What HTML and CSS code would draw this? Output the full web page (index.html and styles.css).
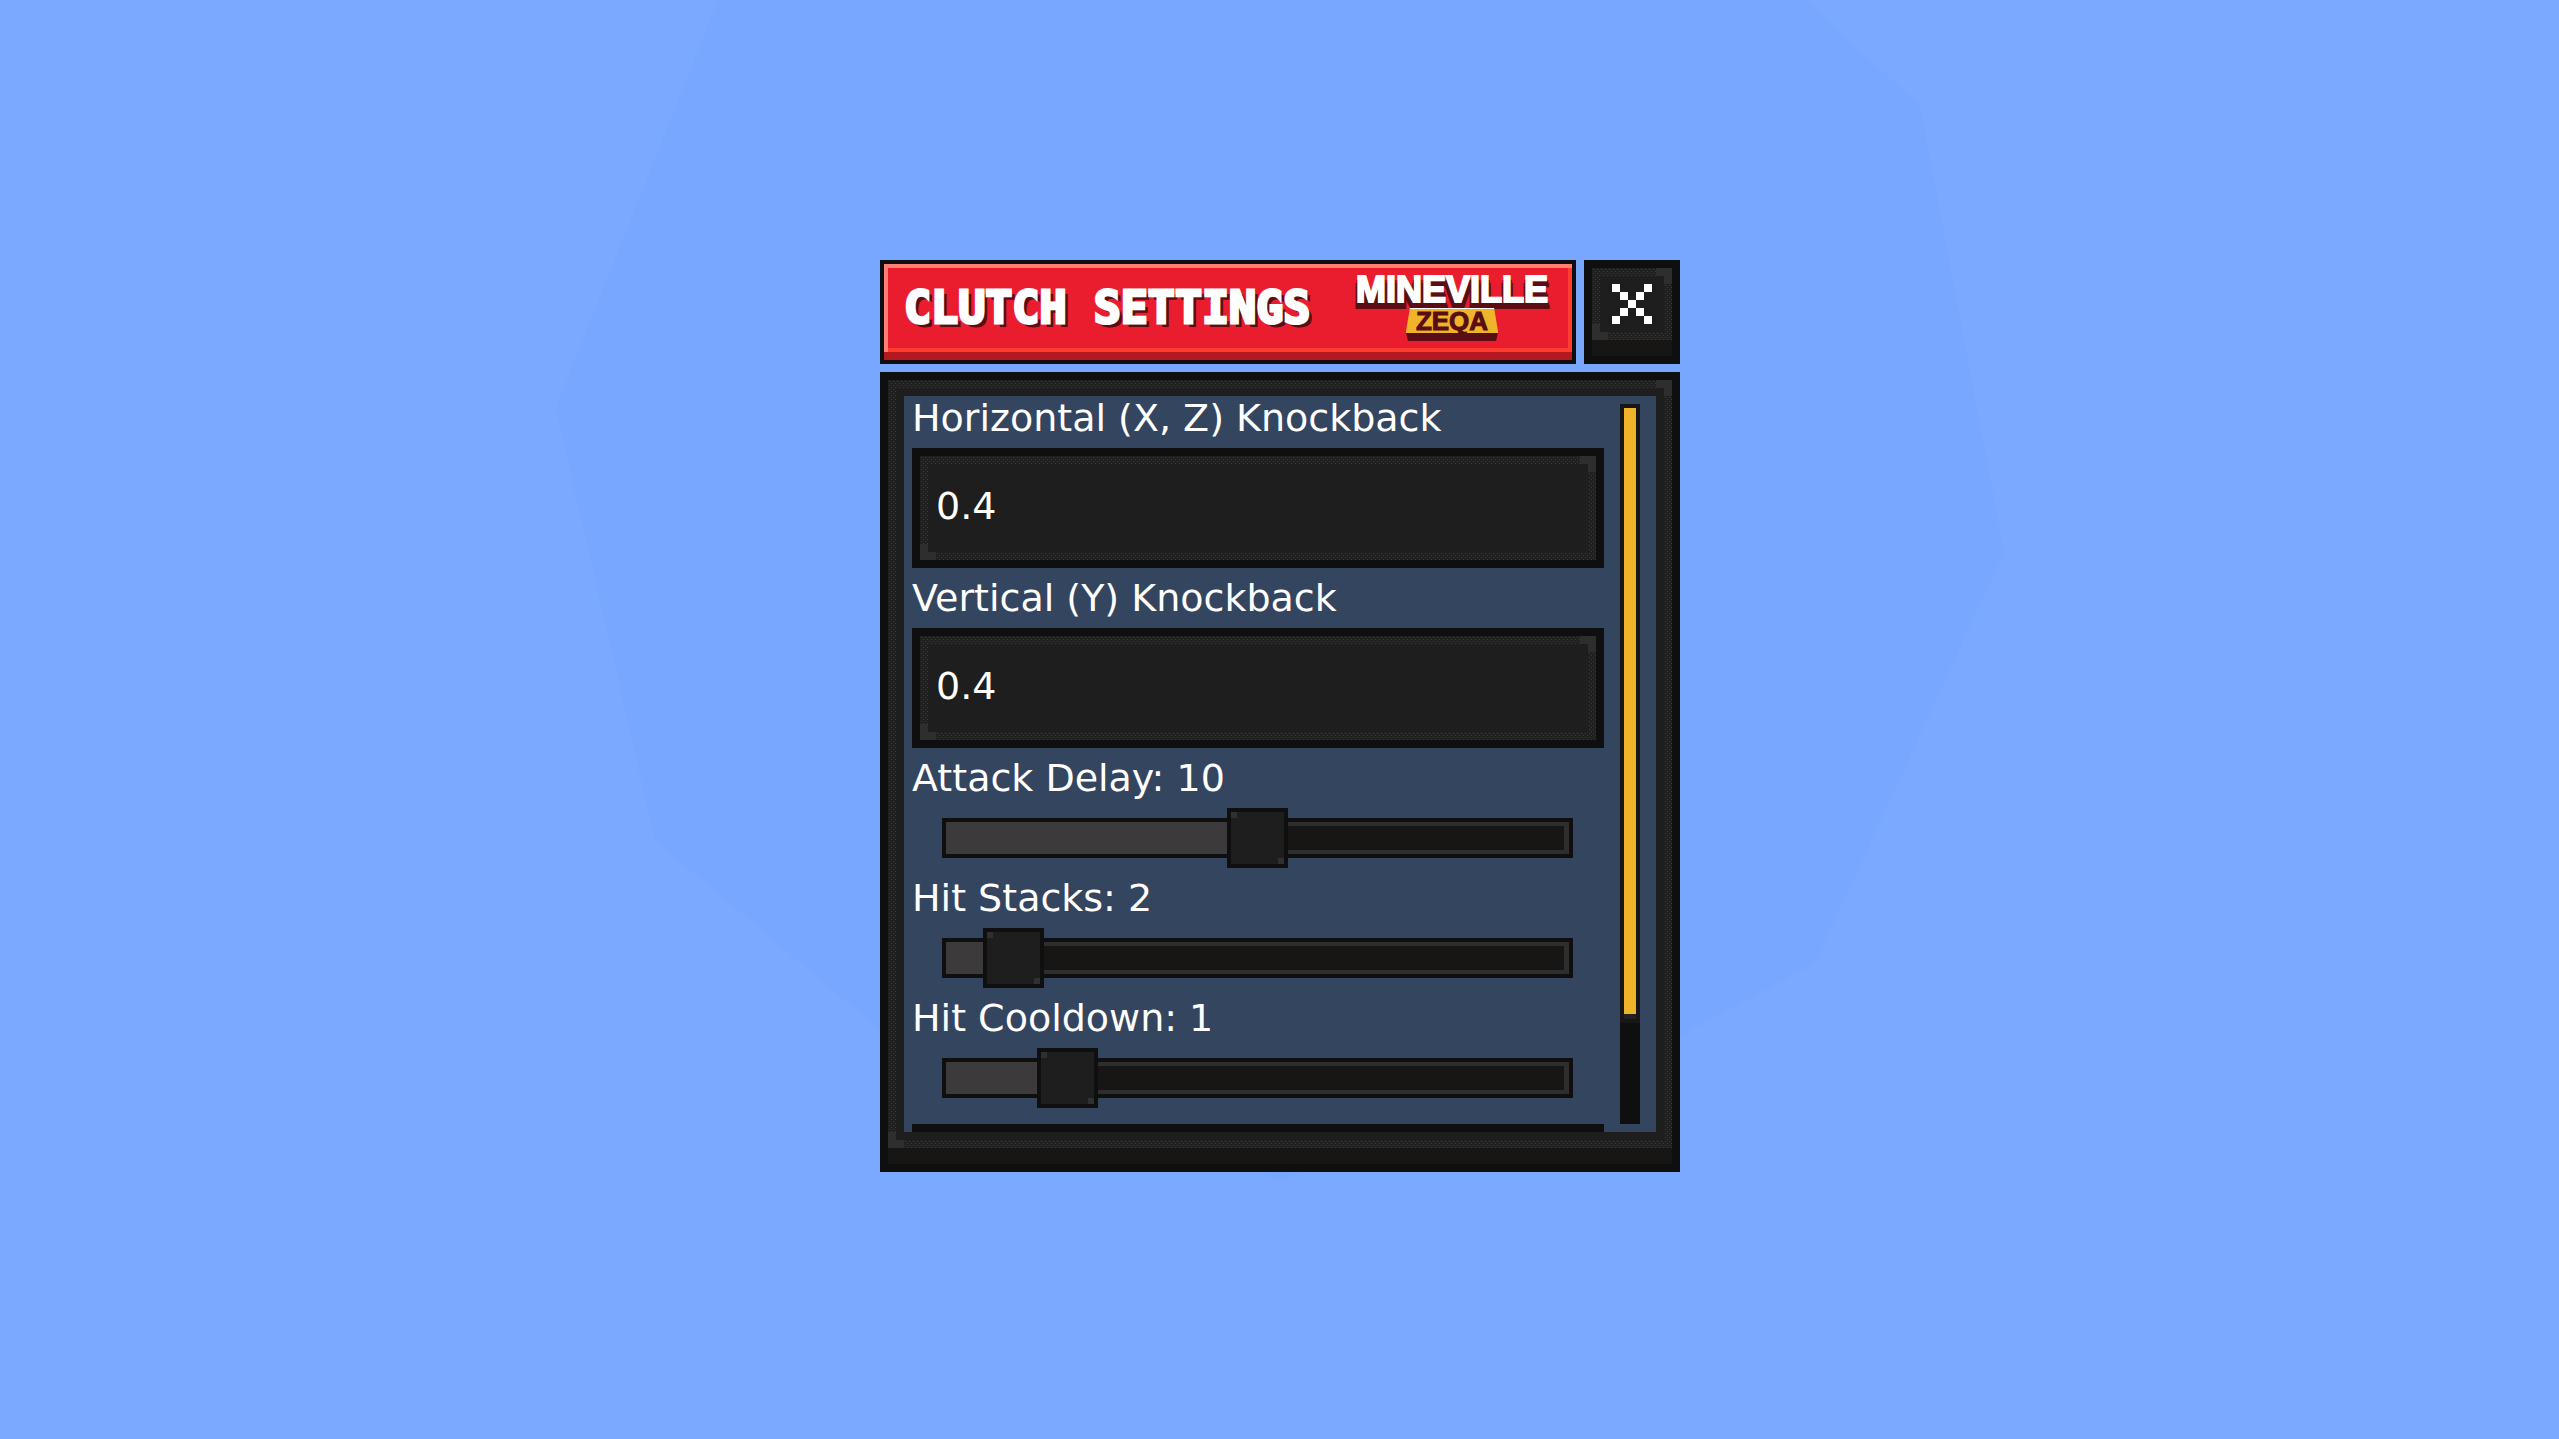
FILE: index.html
```html
<!DOCTYPE html>
<html lang="en">
<head>
<meta charset="utf-8">
<title>Clutch Settings</title>
<link rel="stylesheet" href="styles.css">
</head>
<body>
<svg class="sky" viewBox="0 0 2559 1439" preserveAspectRatio="xMidYMid slice" aria-hidden="true">
  <polygon points="718,0 1806,0 1920,106 2004,552 1815,963 1680,1036 1280,1180 880,1030 655,840 556,408"/>
</svg>
<main class="dialog">
  <header class="top">
    <div class="banner">
      <h1 class="title">CLUTCH SETTINGS</h1>
      <div class="logo">
        <span class="logo-name">MINEVILLE</span>
        <span class="logo-tag">ZEQA</span>
      </div>
    </div>
    <button class="close" type="button" aria-label="Close">
      <svg class="cross" viewBox="0 0 5 5" aria-hidden="true" shape-rendering="crispEdges">
        <path d="M0 0h1v1H0zM4 0h1v1H4zM1 1h1v1H1zM3 1h1v1H3zM2 2h1v1H2zM1 3h1v1H1zM3 3h1v1H3zM0 4h1v1H0zM4 4h1v1H4z"/>
      </svg>
    </button>
  </header>
  <section class="panel">
    <div class="frame">
      <div class="view">
        <form class="fields">
          <label class="label" for="horizontal">Horizontal (X, Z) Knockback</label>
          <input class="text" id="horizontal" type="text" value="0.4">
          <label class="label" for="vertical">Vertical (Y) Knockback</label>
          <input class="text" id="vertical" type="text" value="0.4">
          <label class="label" for="delay">Attack Delay: 10</label>
          <input class="range" id="delay" type="range" min="0" max="20" value="10" style="--fill:50%">
          <label class="label" for="stacks">Hit Stacks: 2</label>
          <input class="range" id="stacks" type="range" min="1" max="15" value="2" style="--fill:10%">
          <label class="label" for="cooldown">Hit Cooldown: 1</label>
          <input class="range" id="cooldown" type="range" min="0" max="6" value="1" style="--fill:20%">
          <button class="submit" type="submit" aria-label="Submit"></button>
        </form>
        <div class="scroll"><div class="scroll-thumb"><div class="scroll-fill"></div></div></div>
      </div>
    </div>
  </section>
</main>
</body>
</html>
```

FILE: styles.css
```css
:root {
  --ink: #0f0f0f;
  --stone: #202020;
  --slate: #344560;
  --gold: #f0b42a;
  --maroon: #5a0d12;
  --dot: #3a3a3a;
  --dots:
    conic-gradient(from 270deg at 1px 1px, var(--dot) 25%, transparent 0) 1px 1px / 4px 4px,
    conic-gradient(from 270deg at 1px 1px, var(--dot) 25%, transparent 0) 3px 3px / 4px 4px;
}

* { box-sizing: border-box; }

body {
  margin: 0;
  min-height: 100vh;
  display: grid;
  place-items: center;
  padding: 0 0 7px 1px;
  background: #7aa9ff;
  font-family: "DejaVu Sans", sans-serif;
  color: #fff;
}

.sky {
  position: absolute;
  inset: 0;
  width: 100%;
  height: 100%;
  fill: #78a7ff;
}

.dialog {
  position: relative;
  width: 100%;
  max-width: 800px;
  display: grid;
  grid-template-columns: minmax(0, 1fr);
  gap: 8px;
}

.top {
  display: grid;
  grid-template-columns: minmax(0, 1fr) 96px;
  gap: 8px;
  height: 104px;
}

.banner {
  display: flex;
  justify-content: space-between;
  align-items: flex-start;
  padding: 0 24px 0 20px;
  border: 4px solid var(--ink);
  background:
    linear-gradient(#b3191f, #b3191f) bottom / 100% 8px no-repeat,
    linear-gradient(#ff8070, #ff8070) top / 100% 4px no-repeat,
    linear-gradient(#ff8070, #ff8070) left / 4px 100% no-repeat,
    linear-gradient(#ff3c30, #ff3c30) right / 4px 100% no-repeat,
    linear-gradient(#ff3c30, #ff3c30) 0 84px / 100% 4px no-repeat,
    #ea1d2f;
}

.title {
  margin: 16px 0 0;
  font: bold 45px/56px "DejaVu Sans Mono", monospace;
  white-space: nowrap;
  -webkit-text-stroke: 3px #fff;
  text-shadow: 4px 4px 0 var(--maroon);
}

.logo {
  display: grid;
  justify-items: center;
  padding-top: 8px;
  font-family: "Liberation Sans", sans-serif;
  font-weight: bold;
}

.logo-name {
  font-size: 36px;
  line-height: 36px;
  -webkit-text-stroke: 2px #fff;
  text-shadow:
    0 1px 0 var(--maroon), 0 2px 0 var(--maroon), 0 3px 0 var(--maroon),
    0 4px 0 var(--maroon), 0 5px 0 var(--maroon), 0 6px 0 var(--maroon),
    0 7px 0 var(--maroon), -2px 4px 0 var(--maroon), 2px 4px 0 var(--maroon),
    -3px 7px 0 var(--maroon), 3px 7px 0 var(--maroon);
}

.logo-tag {
  padding: 0 10px 8px;
  border-top: 1px solid #fff;
  background: linear-gradient(var(--gold) 24px, var(--maroon) 0);
  clip-path: polygon(4px 0, calc(100% - 4px) 0, 100% 24px, calc(100% - 2px) 100%, 2px 100%, 0 24px);
  color: var(--maroon);
  font-size: 26px;
  line-height: 24px;
  -webkit-text-stroke: 1px var(--maroon);
}

.close {
  display: grid;
  justify-items: center;
  align-items: start;
  padding: 16px 0 0;
  border: 8px solid var(--ink);
  background:
    linear-gradient(#181614, #181614) bottom / 100% 16px no-repeat,
    linear-gradient(#2e2e2e, #2e2e2e) right 0 top 0 / 16px 8px no-repeat,
    linear-gradient(#2e2e2e, #2e2e2e) right 0 top 8px / 8px 8px no-repeat,
    linear-gradient(#2e2e2e, #2e2e2e) left 0 top 56px / 8px 8px no-repeat,
    linear-gradient(#2e2e2e, #2e2e2e) left 0 top 64px / 16px 8px no-repeat,
    linear-gradient(#1e1e1e, #1e1e1e) 8px 8px / 64px 56px no-repeat,
    var(--dots),
    var(--stone);
}

.cross {
  width: 40px;
  height: 40px;
  fill: #fff;
}

.panel {
  aspect-ratio: 1;
  border: 8px solid var(--ink);
  background: #181614;
  padding-bottom: 16px;
}

.frame {
  height: 100%;
  padding: 16px;
  background:
    linear-gradient(#2e2e2e, #2e2e2e) right 0 top 0 / 16px 8px no-repeat,
    linear-gradient(#2e2e2e, #2e2e2e) right 0 top 8px / 8px 8px no-repeat,
    linear-gradient(#2e2e2e, #2e2e2e) left 0 bottom 8px / 8px 8px no-repeat,
    linear-gradient(#2e2e2e, #2e2e2e) left 0 bottom 0 / 16px 8px no-repeat,
    var(--dots),
    var(--stone);
}

.view {
  height: 100%;
  display: grid;
  grid-template-columns: minmax(0, 1fr) 20px;
  grid-template-rows: minmax(0, 1fr);
  gap: 16px;
  padding: 0 16px 0 8px;
  overflow: hidden;
  background: var(--slate);
  box-shadow: 0 0 0 8px #1e1e1e;
}

.fields {
  min-height: 0;
  display: flex;
  flex-direction: column;
  gap: 8px;
}

.label {
  flex: none;
  font-size: 38px;
  line-height: 44px;
  white-space: nowrap;
}

.text {
  flex: none;
  width: 100%;
  height: 120px;
  padding: 0 8px 4px 16px;
  border: 8px solid var(--ink);
  border-radius: 0;
  outline: 0;
  color: #fff;
  font: 38px/44px "DejaVu Sans", sans-serif;
  background:
    linear-gradient(#2e2e2e, #2e2e2e) right 0 top 0 / 16px 8px no-repeat,
    linear-gradient(#2e2e2e, #2e2e2e) right 0 top 8px / 8px 8px no-repeat,
    linear-gradient(#2e2e2e, #2e2e2e) left 0 bottom 8px / 8px 8px no-repeat,
    linear-gradient(#2e2e2e, #2e2e2e) left 0 bottom 0 / 16px 8px no-repeat,
    linear-gradient(#1e1e1e, #1e1e1e) center / calc(100% - 16px) calc(100% - 16px) no-repeat,
    var(--dots),
    var(--stone);
}

.range {
  flex: none;
  appearance: none;
  height: 60px;
  margin: 0 31px 0 30px;
  background: none;
  outline: 0;
}

.range::-webkit-slider-runnable-track {
  height: 40px;
  box-shadow: inset 0 0 0 4px var(--ink);
  background:
    linear-gradient(#3c3a3b, #3c3a3b) left / var(--fill) 100% no-repeat,
    linear-gradient(#171614, #171614) left / calc(100% - 9px) 24px no-repeat,
    #2e2e2e;
}

.range::-webkit-slider-thumb {
  appearance: none;
  width: 61px;
  height: 60px;
  margin-top: -10px;
  border: 4px solid var(--ink);
  background:
    linear-gradient(#303030, #303030) left top / 6px 6px no-repeat,
    linear-gradient(#303030, #303030) right bottom / 6px 6px no-repeat,
    #1e1e1e;
}

.submit {
  flex: none;
  height: 120px;
  margin-top: 8px;
  border: 8px solid var(--ink);
  background: var(--stone);
}

.scroll {
  margin: 8px 0;
  background: var(--ink);
}

.scroll-thumb {
  height: 86%;
  padding: 4px 4px 9px;
  background: #181616;
}

.scroll-fill {
  height: 100%;
  background: var(--gold);
  box-shadow: 0 5px 0 #222;
}
```
